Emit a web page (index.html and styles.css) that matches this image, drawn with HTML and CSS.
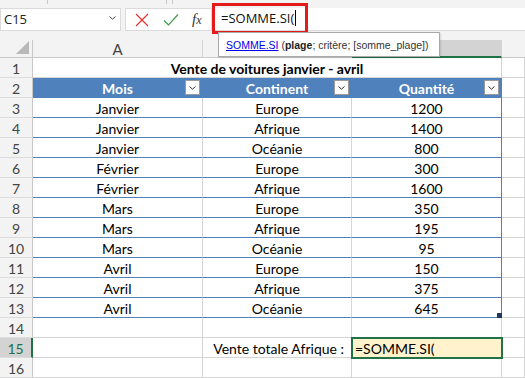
FILE: index.html
```html
<!DOCTYPE html>
<html lang="fr">
<head>
<meta charset="utf-8">
<title>Vente de voitures</title>
<link rel="stylesheet" href="styles.css">
</head>
<body>
<div class="ribbon"><i class="tick t1"></i><i class="tick t2"></i><i class="tick t3"></i></div>
<div class="fbar">
  <div class="namebox"><span>C15</span>
    <svg class="chev" width="7" height="4" viewBox="0 0 7 4"><path d="M0.5 0.5 L3.5 3.2 L6.5 0.5" fill="none" stroke="#444" stroke-width="1"/></svg>
  </div>
  <div class="fxbox">
    <svg class="ico" width="14" height="14" viewBox="0 0 14 14"><path d="M1 1 L13 13 M13 1 L1 13" stroke="#e0322f" stroke-width="1.2" fill="none"/></svg>
    <svg class="ico" width="16" height="14" viewBox="0 0 16 14"><path d="M1 7.5 L5.5 12 L15 1.5" stroke="#3b9b4a" stroke-width="1.2" fill="none"/></svg>
    <span class="fx">f<span class="fxx">x</span></span>
  </div>
  <div class="finput">=SOMME.SI(<span class="caret"></span></div>
</div>
<div class="redbox"></div>
<div class="tip"><a class="tiplink">SOMME.SI</a>&nbsp;(<b>plage</b>; critère; [somme_plage])</div>

<div class="sheet">
  <div class="corner"><i class="tri"></i></div>
  <div class="ch">A</div>
  <div class="ch"></div>
  <div class="ch sel"></div>
  <div class="ch last"></div>

  <div class="rh">1</div>
  <div class="c title">Vente de voitures janvier - avril</div>
  <div class="c"></div>

  <div class="rh">2</div>
  <div class="c th">Mois<span class="filter"><svg width="7" height="4" viewBox="0 0 7 4"><path d="M0.5 0.5 L3.5 3.2 L6.5 0.5" fill="none" stroke="#333" stroke-width="1"/></svg></span></div>
  <div class="c th">Continent<span class="filter"><svg width="7" height="4" viewBox="0 0 7 4"><path d="M0.5 0.5 L3.5 3.2 L6.5 0.5" fill="none" stroke="#333" stroke-width="1"/></svg></span></div>
  <div class="c th">Quantité<span class="filter"><svg width="7" height="4" viewBox="0 0 7 4"><path d="M0.5 0.5 L3.5 3.2 L6.5 0.5" fill="none" stroke="#333" stroke-width="1"/></svg></span></div>
  <div class="c"></div>

  <div class="rh">3</div><div class="c td">Janvier</div><div class="c td">Europe</div><div class="c td tl">1200</div><div class="c"></div>
  <div class="rh">4</div><div class="c td">Janvier</div><div class="c td">Afrique</div><div class="c td tl">1400</div><div class="c"></div>
  <div class="rh">5</div><div class="c td">Janvier</div><div class="c td">Océanie</div><div class="c td tl">800</div><div class="c"></div>
  <div class="rh">6</div><div class="c td">Février</div><div class="c td">Europe</div><div class="c td tl">300</div><div class="c"></div>
  <div class="rh">7</div><div class="c td">Février</div><div class="c td">Afrique</div><div class="c td tl">1600</div><div class="c"></div>
  <div class="rh">8</div><div class="c td">Mars</div><div class="c td">Europe</div><div class="c td tl">350</div><div class="c"></div>
  <div class="rh">9</div><div class="c td">Mars</div><div class="c td">Afrique</div><div class="c td tl">195</div><div class="c"></div>
  <div class="rh">10</div><div class="c td">Mars</div><div class="c td">Océanie</div><div class="c td tl">95</div><div class="c"></div>
  <div class="rh">11</div><div class="c td">Avril</div><div class="c td">Europe</div><div class="c td tl">150</div><div class="c"></div>
  <div class="rh">12</div><div class="c td">Avril</div><div class="c td">Afrique</div><div class="c td tl">375</div><div class="c"></div>
  <div class="rh">13</div><div class="c td">Avril</div><div class="c td">Océanie</div><div class="c td tl end">645<i class="handle"></i></div><div class="c"></div>

  <div class="rh">14</div><div class="c"></div><div class="c"></div><div class="c"></div><div class="c"></div>
  <div class="rh active">15</div><div class="c"></div><div class="c right">Vente totale Afrique :</div><div class="c left cur">=SOMME.SI(</div><div class="c"></div>
  <div class="rh">16</div><div class="c"></div><div class="c"></div><div class="c"></div><div class="c"></div>
</div>
</body>
</html>
```
FILE: styles.css
```css
* { box-sizing: border-box; }
body {
  margin: 0;
  width: 525px;
  height: 378px;
  overflow: hidden;
  position: relative;
  background: #fff;
  font-family: Lato, "Liberation Sans", sans-serif;
  color: #000;
}
.ribbon {
  height: 5px;
  background: #f3f3f3;
  position: relative;
}
.tick {
  position: absolute;
  top: 0;
  width: 1px;
  height: 4px;
  background: #c8c8c8;
}
.t1 { left: 47px; }
.t2 { left: 166px; }
.t3 { left: 172px; }

.fbar {
  height: 35px;
  padding-top: 3px;
  background: #f3f3f3;
  display: flex;
  align-items: flex-start;
  font-family: "Open Sans", "Liberation Sans", sans-serif;
  font-size: 13px;
}
.namebox {
  width: 121px;
  height: 23px;
  background: #fff;
  border: 1px solid #dadada;
  display: flex;
  align-items: center;
  justify-content: space-between;
  padding: 0 4px 2px 3px;
  color: #222;
}
.chev { margin-bottom: 2px; }
.fxbox {
  margin-left: 4px;
  width: 87px;
  height: 23px;
  background: #fff;
  border: 1px solid #dadada;
  display: flex;
  align-items: center;
  padding-left: 9px;
  gap: 14px;
}
.fx {
  font-family: "Liberation Serif", serif;
  font-style: italic;
  font-size: 15px;
  color: #333;
  margin-left: -1px;
}
.fxx { font-size: 12px; }
.finput {
  flex: 1;
  margin-left: 1px;
  height: 23px;
  background: #fff;
  border-bottom: 1px solid #dadada;
  display: flex;
  align-items: center;
  padding: 0 0 2px 8px;
  color: #111;
}
.caret {
  display: inline-block;
  width: 1px;
  height: 16px;
  background: #000;
  margin-left: 1px;
}
.redbox {
  position: absolute;
  left: 212px;
  top: 3px;
  width: 96px;
  height: 31px;
  border: 3px solid #e31b1b;
}
.tip {
  position: absolute;
  left: 218px;
  top: 32px;
  width: 222px;
  height: 25px;
  background: #fff;
  border: 1px solid #a9a9a9;
  box-shadow: 1px 1px 2px rgba(0,0,0,0.12);
  display: flex;
  align-items: center;
  padding-left: 7px;
  font-family: "Liberation Sans", sans-serif;
  font-size: 10.5px;
  color: #333;
  z-index: 5;
  white-space: nowrap;
}
.tiplink { color: #0000ee; text-decoration: underline; }
.tip b { font-weight: bold; color: #222; }

.sheet {
  display: grid;
  grid-template-columns: 33px 170px 149px 150px 1fr;
  grid-template-rows: 18px repeat(16, 20px);
  font-size: 14px;
}
.corner {
  background: #f3f3f3;
  border-right: 1px solid #c8c8c8;
  border-bottom: 1px solid #c8c8c8;
  position: relative;
}
.tri {
  position: absolute;
  right: 3px;
  bottom: 3px;
  width: 0;
  height: 0;
  border-left: 13px solid transparent;
  border-bottom: 13px solid #b9b9b9;
}
.ch {
  background: #f3f3f3;
  border-right: 1px solid #d4d4d4;
  border-bottom: 1px solid #c8c8c8;
  display: flex;
  align-items: center;
  justify-content: center;
  color: #444;
  font-size: 15px;
}
.ch.sel {
  background: #d3d3d3;
  border-bottom: 2px solid #217346;
}
.ch.last { border-right: none; }
.rh {
  background: #f3f3f3;
  border-right: 1px solid #c8c8c8;
  border-bottom: 1px solid #dcdcdc;
  display: flex;
  align-items: center;
  justify-content: center;
  color: #444;
  font-size: 14px;
  padding-top: 1px;
}
.rh.active {
  background: #d3d3d3;
  color: #217346;
  border-right: 2px solid #217346;
}
.c {
  border-right: 1px solid #d4d4d4;
  border-bottom: 1px solid #d4d4d4;
  display: flex;
  align-items: center;
  justify-content: center;
  white-space: nowrap;
  padding-top: 1px;
}
.title {
  grid-column: span 3;
  font-weight: bold;
}
.th {
  background: #4f81bd;
  color: #fff;
  font-weight: bold;
  border-right-color: #4f81bd;
  border-bottom-color: #4f81bd;
  position: relative;
}
.filter {
  position: absolute;
  right: 2px;
  top: 2px;
  width: 15px;
  height: 15px;
  background: #fff;
  border: 1px solid #9b9b9b;
  display: flex;
  align-items: center;
  justify-content: center;
}
.td { border-bottom-color: #4f81bd; }
.td.tl { border-right-color: #4f81bd; }
.end { position: relative; }
.handle {
  position: absolute;
  right: -1px;
  bottom: -1px;
  width: 5px;
  height: 5px;
  background: #1f3a5f;
}
.right { justify-content: flex-end; padding-right: 7px; }
.left { justify-content: flex-start; padding-left: 3px; }
.cur {
  background: #fff2cc;
  outline: 2px solid #217346;
  outline-offset: -1px;
  position: relative;
  z-index: 1;
}
```
